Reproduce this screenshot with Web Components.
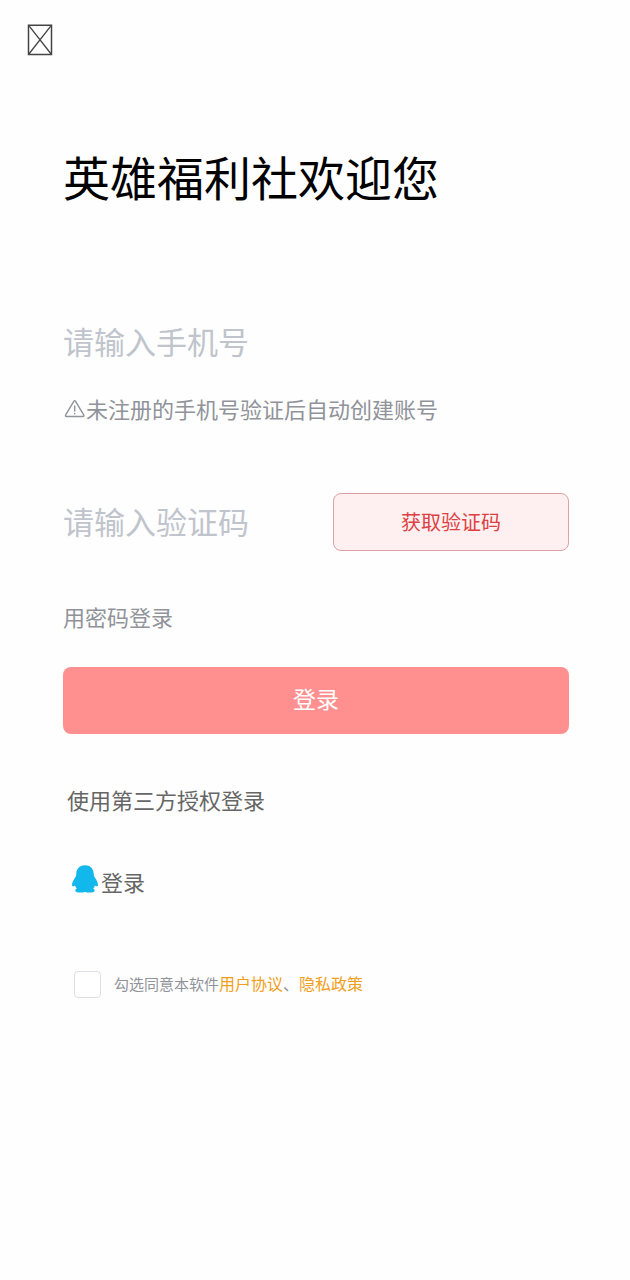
<!DOCTYPE html>
<html lang="zh-CN">
<head>
<meta charset="utf-8">
<meta name="viewport" content="width=device-width, initial-scale=1">
<title>登录</title>
<style>
  body {
    margin: 0;
    background: #fefefe;
    color: #666;
    font-family: "Noto Sans CJK SC", sans-serif;
    font-size: 22px;
    line-height: 32px;
  }
</style>
</head>
<body>
<login-page heading="英雄福利社欢迎您">
  <text-field slot="phone" type="tel" label="请输入手机号"></text-field>
  <form-tip slot="phone">未注册的手机号验证后自动创建账号</form-tip>
  <text-field slot="code" type="text" label="请输入验证码"></text-field>
  <action-button slot="code" variant="plain">获取验证码</action-button>
  <text-link slot="actions">用密码登录</text-link>
  <action-button slot="actions">登录</action-button>
  <third-party-login slot="other" heading="使用第三方授权登录">登录</third-party-login>
  <agreement-check slot="other">勾选同意本软件</agreement-check>
</login-page>

<script>
// attach an open shadow root and fill it from a template
function render(el, html) {
  const template = document.createElement("template");
  template.innerHTML = html;
  const root = el.attachShadow({ mode: "open" });
  root.appendChild(template.content.cloneNode(true));
  return root;
}

class NavBar extends HTMLElement {
  connectedCallback() {
    render(this, /* html */ `
      <style>
      :host { display: flex; padding: 24px 27px 0; }
      button {
        display: flex;
        padding: 0;
        border: 0;
        background: none;
        color: #444;
        cursor: pointer;
      }
      </style>
      <button type="button" aria-label="返回">
        <svg width="26" height="32" viewBox="0 0 26 32" fill="none" stroke="currentColor">
          <path d="M1.5 1.2h23v29.3h-23z" stroke-width="1.5"/>
          <path d="M1.5 1.2l23 29.3M24.5 1.2l-23 29.3" stroke-width="1.3"/>
        </svg>
      </button>
    `);
  }
}

class LoginPage extends HTMLElement {
  connectedCallback() {
    const root = render(this, /* html */ `
      <style>
      :host { display: block; }
      main { padding: 88px 61px 64px 63px; }
      h1 {
        margin: 0 0 105px;
        color: #000;
        font-size: 47px;
        font-weight: 400;
        line-height: 64px;
      }
      .phone {
        display: grid;
        gap: 25px;
      }
      .code {
        display: grid;
        grid-template-columns: 1fr 236px;
        gap: 20px;
        margin-top: 69px;
      }
      .actions {
        display: grid;
        gap: 35px;
        margin-top: 49px;
      }
      </style>
      <nav-bar></nav-bar>
      <main>
        <h1></h1>
        <div class="phone"><slot name="phone"></slot></div>
        <div class="code"><slot name="code"></slot></div>
        <div class="actions"><slot name="actions"></slot></div>
        <slot name="other"></slot>
      </main>
    `);
    root.querySelector("h1").textContent = this.getAttribute("heading");
  }
}

class TextField extends HTMLElement {
  connectedCallback() {
    const root = render(this, /* html */ `
      <style>
      :host { display: block; min-width: 0; }
      input {
        display: block;
        box-sizing: border-box;
        width: 100%;
        height: 54px;
        padding: 0;
        border: 0;
        outline: 0;
        background: none;
        color: #303133;
        font-family: inherit;
        font-size: 31px;
      }
      input::placeholder { color: #c0c4cc; opacity: 1; }
      </style>
      <input>
    `);
    const input = root.querySelector("input");
    const label = this.getAttribute("label");
    input.type = this.getAttribute("type");
    input.placeholder = label;
    input.setAttribute("aria-label", label);
  }
}

class FormTip extends HTMLElement {
  connectedCallback() {
    render(this, /* html */ `
      <style>
      :host {
        display: flex;
        align-items: center;
        gap: 1px;
        color: #909399;
      }
      svg { flex: none; }
      </style>
      <svg width="22" height="24" viewBox="0 -2 22 24" fill="none" stroke="currentColor" stroke-width="1.4" stroke-linecap="round" stroke-linejoin="round" aria-hidden="true">
        <path d="M10.8 3.3Q11.7 1.9 12.6 3.3L20.7 16.9Q21.5 18.5 19.8 18.5H3.6Q1.9 18.5 2.7 16.9Z"/>
        <path d="M11.7 8v5M11.7 15.4v.3"/>
      </svg>
      <span><slot></slot></span>
    `);
  }
}

class ActionButton extends HTMLElement {
  connectedCallback() {
    render(this, /* html */ `
      <style>
      :host { display: block; }
      button {
        display: block;
        box-sizing: border-box;
        width: 100%;
        height: 67px;
        padding: 0 0 5px;
        border: 0;
        border-radius: 8px;
        background: #ff908f;
        color: #fff;
        font-family: inherit;
        font-size: 23px;
        cursor: pointer;
      }
      :host([variant="plain"]) button {
        height: 58px;
        padding-bottom: 2px;
        border: 1px solid #dfa0a2;
        background: #fef0f0;
        color: #dd3f42;
        font-size: 20px;
      }
      </style>
      <button type="button"><slot></slot></button>
    `);
  }
}

class TextLink extends HTMLElement {
  connectedCallback() {
    render(this, /* html */ `
      <style>
      :host { display: block; }
      a { color: #909399; text-decoration: none; }
      </style>
      <a href="#"><slot></slot></a>
    `);
  }
}

class ThirdPartyLogin extends HTMLElement {
  connectedCallback() {
    const root = render(this, /* html */ `
      <style>
      :host { display: block; margin-top: 49px; padding-left: 4px; }
      h2 {
        margin: 0 0 50px;
        font-size: 22px;
        font-weight: 400;
      }
      a {
        display: flex;
        align-items: flex-start;
        gap: 2px;
        width: fit-content;
        padding-left: 4px;
        color: inherit;
        text-decoration: none;
      }
      </style>
      <h2></h2>
      <a href="#">
        <svg width="28" height="28" viewBox="0 0 28 28" fill="#12b7eb" aria-hidden="true">
          <path d="M14 .3C9 .3 5.4 3.8 5.3 8.6C5.3 9.6 5.2 10.5 4.8 11.6C2.8 14.4 .9 17.6 1 20.3C1.1 21.8 2.6 21.4 4 20.4C4.4 21.6 5 22.7 5.9 23.6C4.7 24.2 4.2 25 4.4 26C4.8 28 11.8 28 14 26.7C16.2 28 23.2 28 23.6 26C23.8 25 23.3 24.2 22.1 23.6C23 22.7 23.6 21.6 24 20.4C25.4 21.4 26.9 21.8 27 20.3C27.1 17.6 25.2 14.4 23.2 11.6C22.8 10.5 22.7 9.6 22.7 8.6C22.6 3.8 19 .3 14 .3Z"/>
        </svg>
        <span><slot></slot></span>
      </a>
    `);
    root.querySelector("h2").textContent = this.getAttribute("heading");
  }
}

class AgreementCheck extends HTMLElement {
  connectedCallback() {
    render(this, /* html */ `
      <style>
      :host {
        display: flex;
        align-items: flex-start;
        gap: 13px;
        margin-top: 74px;
        padding-left: 11px;
        color: #909399;
        font-size: 16px;
        line-height: 24px;
      }
      input {
        appearance: none;
        flex: none;
        box-sizing: border-box;
        width: 27px;
        height: 27px;
        margin: 0;
        border: 1px solid #dcdfe6;
        border-radius: 4px;
        background: #fff;
      }
      input:checked { background: #ff908f; }
      label { font-size: 15px; }
      a { color: #f0a020; text-decoration: none; }
      </style>
      <input type="checkbox" id="agree">
      <div><label for="agree"><slot></slot></label><a href="#">用户协议</a>、<a href="#">隐私政策</a></div>
    `);
  }
}

customElements.define("nav-bar", NavBar);
customElements.define("login-page", LoginPage);
customElements.define("text-field", TextField);
customElements.define("form-tip", FormTip);
customElements.define("action-button", ActionButton);
customElements.define("text-link", TextLink);
customElements.define("third-party-login", ThirdPartyLogin);
customElements.define("agreement-check", AgreementCheck);
</script>
</body>
</html>
